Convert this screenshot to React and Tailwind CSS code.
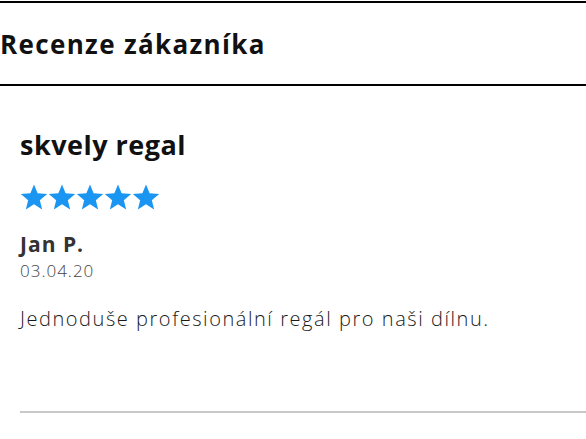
import React from "react";

function Star() {
    return (
        <svg width="28" height="28" viewBox="0 0 24 24" className="shrink-0">
            <path
                fill="#1b95f2"
                d="M12 1.2l3.1 7.6 8.2.6-6.3 5.3 2 8-7-4.4-7 4.4 2-8L.7 9.4l8.2-.6z"
            />
        </svg>
    );
}

function App() {
    return (
        <div className="w-[586px] h-[439px] bg-white overflow-hidden font-['Open_Sans',sans-serif]">
            <div className="mt-px border-y-2 border-black h-[85px] flex items-center">
                <h2 className="text-[26px] font-bold text-[#111] leading-none tracking-[1.35px]">Recenze zákazníka</h2>
            </div>
            <div className="pl-5 pt-[45px]">
                <h3 className="text-[27px] font-bold text-[#111] leading-none tracking-[0.5px]">skvely regal</h3>
                <div className="flex mt-[25px]">
                    <Star /><Star /><Star /><Star /><Star />
                </div>
                <p className="mt-[23px] text-[21px] font-bold text-[#333] leading-none tracking-[1px]">Jan P.</p>
                <p className="mt-[7px] text-[17px] font-light text-[#444] leading-none tracking-[1px]">03.04.20</p>
                <p className="mt-[30px] text-[20px] font-light text-[#1a1a1a] leading-none tracking-[1.55px]">Jednoduše profesionální regál pro naši dílnu.</p>
                <div className="mt-[82px] h-[2px] bg-[#c8c8c8]"></div>
            </div>
        </div>
    );
}

export default App;
